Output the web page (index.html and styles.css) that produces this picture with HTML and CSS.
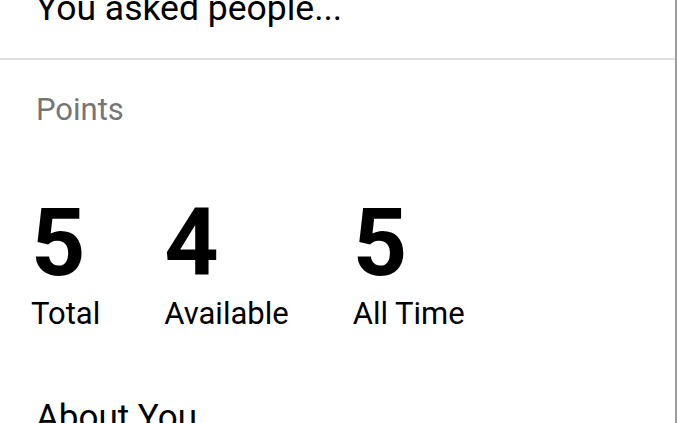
FILE: index.html
```html
<!DOCTYPE html>
<html>
<head>
<meta charset="utf-8">
<link rel="stylesheet" href="styles.css">
</head>
<body>
<div class="panel">
  <div class="top">
    <div class="heading">You asked people...</div>
  </div>
  <div class="points">
    <div class="label">Points</div>
    <div class="stats">
      <div class="stat">
        <div class="num">5</div>
        <div class="cap">Total</div>
      </div>
      <div class="stat">
        <div class="num">4</div>
        <div class="cap">Available</div>
      </div>
      <div class="stat">
        <div class="num">5</div>
        <div class="cap">All Time</div>
      </div>
    </div>
    <div class="about">About You</div>
  </div>
</div>
</body>
</html>
```

FILE: styles.css
```css
html, body {
  margin: 0;
  padding: 0;
  background: #ffffff;
}
body {
  font-family: Roboto, "Noto Sans", sans-serif;
  color: #000;
  overflow: hidden;
}
.panel {
  width: 675px;
  height: 423px;
  border-right: 2px solid #9e9e9e;
  overflow: hidden;
}
.top {
  padding: 0 36px 42px;
  border-bottom: 2px solid #e0e0e0;
}
.heading {
  font-size: 35.5px;
  line-height: 16px;
}
.points {
  padding: 32px 31px 0;
}
.label {
  font-size: 31px;
  line-height: 36px;
  color: #757575;
  padding-left: 5px;
}
.stats {
  display: flex;
  gap: 64px;
  margin-top: 68px;
}
.stat {
  display: flex;
  flex-direction: column;
}
.num {
  font-size: 95px;
  font-weight: 700;
  line-height: 94px;
}
.cap {
  font-size: 31px;
  line-height: 36px;
  margin-top: 6px;
}
.about {
  font-size: 35px;
  line-height: 36px;
  margin-top: 68px;
  padding-left: 5px;
}
```
